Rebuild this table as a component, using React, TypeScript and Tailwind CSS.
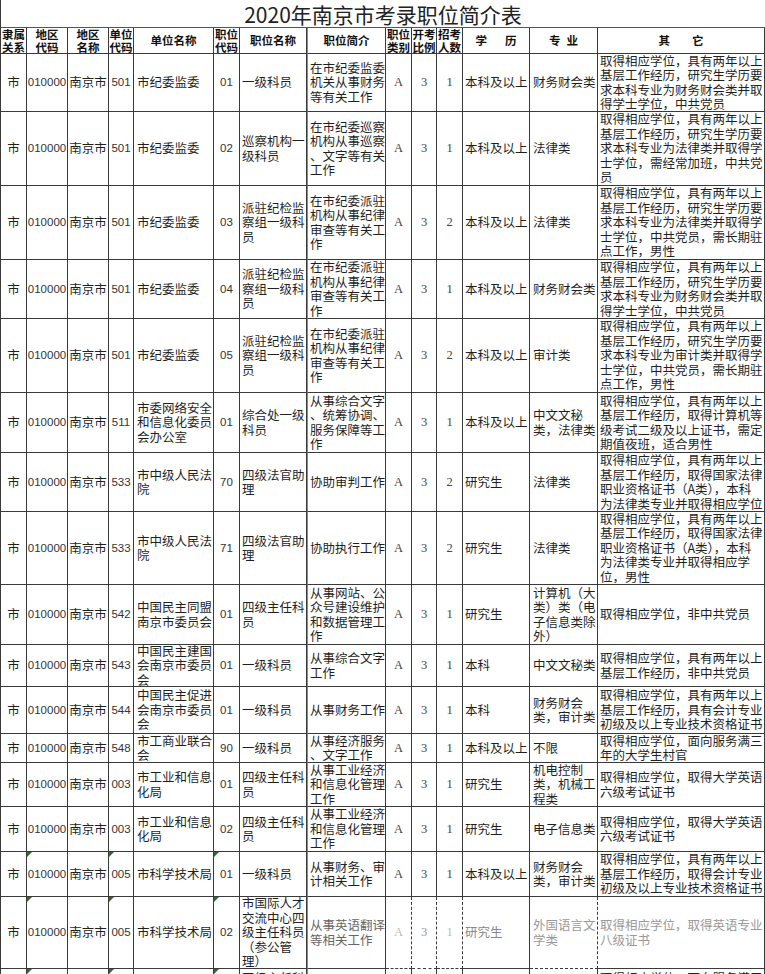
import React from "react";

type T = string | string[];
type Row = {
  h: string;
  ucode: string;
  uname: T;
  pcode: string;
  pname: T;
  desc: T;
  n: string;
  edu: string;
  major: T;
  other: T;
  tri?: boolean;
  wm?: boolean;
};

const GRID =
  "grid grid-cols-[26px_41px_41px_25px_80px_26px_67px_79px_26px_25px_26px_67px_68px_167px]";

const Lines = ({ t }: { t: T }) => {
  const arr = Array.isArray(t) ? t : [t];
  return (
    <div className="flex flex-col">
      {arr.map((l, i) => (
        <span key={i} className="whitespace-nowrap">
          {l}
        </span>
      ))}
    </div>
  );
};

const Tri = () => (
  <span className="absolute left-0 top-0 h-0 w-0 border-t-[5px] border-r-[5px] border-t-[#2f6b2f] border-r-transparent" />
);

const base =
  "relative flex items-center overflow-hidden border-b border-r border-[#3a3a3a]";

const C = ({
  t,
  center,
  cls = "",
  tri,
}: {
  t: T;
  center?: boolean;
  cls?: string;
  tri?: boolean;
}) => (
  <div
    className={`${base} ${center ? "justify-center text-center" : "justify-start pl-[2px]"} ${cls}`}
  >
    {tri && <Tri />}
    <Lines t={t} />
  </div>
);

const O1 = "取得相应学位，具有两年以上";
const O2 = "基层工作经历，研究生学历要";

const rows: Row[] = [
  {
    h: "h-[58px]", ucode: "501", uname: "市纪委监委", pcode: "01", pname: "一级科员",
    desc: ["在市纪委监委", "机关从事财务", "等有关工作"], n: "1", edu: "本科及以上", major: "财务财会类",
    other: [O1, O2, "求本科专业为财务财会类并取", "得学士学位，中共党员"],
  },
  {
    h: "h-[74px]", ucode: "501", uname: "市纪委监委", pcode: "02", pname: ["巡察机构一", "级科员"],
    desc: ["在市纪委巡察", "机构从事巡察", "、文字等有关", "工作"], n: "1", edu: "本科及以上", major: "法律类",
    other: [O1, O2, "求本科专业为法律类并取得学", "士学位，需经常加班，中共党", "员"],
  },
  {
    h: "h-[74px]", ucode: "501", uname: "市纪委监委", pcode: "03", pname: ["派驻纪检监", "察组一级科", "员"],
    desc: ["在市纪委派驻", "机构从事纪律", "审查等有关工", "作"], n: "2", edu: "本科及以上", major: "法律类",
    other: [O1, O2, "求本科专业为法律类并取得学", "士学位，中共党员，需长期驻", "点工作，男性"],
  },
  {
    h: "h-[59px]", ucode: "501", uname: "市纪委监委", pcode: "04", pname: ["派驻纪检监", "察组一级科", "员"],
    desc: ["在市纪委派驻", "机构从事纪律", "审查等有关工", "作"], n: "1", edu: "本科及以上", major: "财务财会类",
    other: [O1, O2, "求本科专业为财务财会类并取", "得学士学位，中共党员"],
  },
  {
    h: "h-[74px]", ucode: "501", uname: "市纪委监委", pcode: "05", pname: ["派驻纪检监", "察组一级科", "员"],
    desc: ["在市纪委派驻", "机构从事纪律", "审查等有关工", "作"], n: "2", edu: "本科及以上", major: "审计类",
    other: [O1, O2, "求本科专业为审计类并取得学", "士学位，中共党员，需长期驻", "点工作，男性"],
  },
  {
    h: "h-[60px]", ucode: "511", uname: ["市委网络安全", "和信息化委员", "会办公室"], pcode: "01",
    pname: ["综合处一级", "科员"], desc: ["从事综合文字", "、统筹协调、", "服务保障等工", "作"], n: "1",
    edu: "本科及以上", major: ["中文文秘", "类，法律类"],
    other: [O1, "基层工作经历，取得计算机等", "级考试二级及以上证书，需定", "期值夜班，适合男性"],
  },
  {
    h: "h-[59px]", ucode: "533", uname: ["市中级人民法", "院"], pcode: "70", pname: ["四级法官助", "理"],
    desc: "协助审判工作", n: "2", edu: "研究生", major: "法律类",
    other: [O1, "基层工作经历，取得国家法律", "职业资格证书（A类），本科", "为法律类专业并取得相应学位"],
  },
  {
    h: "h-[73px]", ucode: "533", uname: ["市中级人民法", "院"], pcode: "71", pname: ["四级法官助", "理"],
    desc: "协助执行工作", n: "2", edu: "研究生", major: "法律类",
    other: [O1, "基层工作经历，取得国家法律", "职业资格证书（A类），本科", "为法律类专业并取得相应学", "位，男性"],
  },
  {
    h: "h-[60px]", ucode: "542", uname: ["中国民主同盟", "南京市委员会"], pcode: "01", pname: ["四级主任科", "员"],
    desc: ["从事网站、公", "众号建设维护", "和数据管理工", "作"], n: "1", edu: "研究生",
    major: ["计算机（大", "类）类（电", "子信息类除", "外）"], other: "取得相应学位，非中共党员",
  },
  {
    h: "h-[42px]", ucode: "543", uname: ["中国民主建国", "会南京市委员", "会"], pcode: "01", pname: "一级科员",
    desc: ["从事综合文字", "工作"], n: "1", edu: "本科", major: "中文文秘类",
    other: [O1, "基层工作经历，非中共党员"],
  },
  {
    h: "h-[47px]", ucode: "544", uname: ["中国民主促进", "会南京市委员", "会"], pcode: "01", pname: "一级科员",
    desc: "从事财务工作", n: "1", edu: "本科", major: ["财务财会", "类，审计类"],
    other: [O1, "基层工作经历，具有会计专业", "初级及以上专业技术资格证书"],
  },
  {
    h: "h-[29px]", ucode: "548", uname: ["市工商业联合", "会"], pcode: "90", pname: "一级科员",
    desc: ["从事经济服务", "、文字工作"], n: "1", edu: "本科及以上", major: "不限",
    other: ["取得相应学位，面向服务满三", "年的大学生村官"],
  },
  {
    h: "h-[44px]", ucode: "003", uname: ["市工业和信息", "化局"], pcode: "01", pname: ["四级主任科", "员"],
    desc: ["从事工业经济", "和信息化管理", "工作"], n: "1", edu: "研究生", major: ["机电控制", "类，机械工", "程类"],
    other: ["取得相应学位，取得大学英语", "六级考试证书"],
  },
  {
    h: "h-[45px]", ucode: "003", uname: ["市工业和信息", "化局"], pcode: "02", pname: ["四级主任科", "员"],
    desc: ["从事工业经济", "和信息化管理", "工作"], n: "1", edu: "研究生", major: "电子信息类",
    other: ["取得相应学位，取得大学英语", "六级考试证书"],
  },
  {
    h: "h-[45px]", ucode: "005", uname: "市科学技术局", pcode: "01", pname: "一级科员",
    desc: ["从事财务、审", "计相关工作"], n: "1", edu: "本科及以上", major: ["财务财会", "类，审计类"],
    other: [O1, "基层工作经历，取得会计专业", "初级及以上专业技术资格证书"], tri: true,
  },
  {
    h: "h-[72px]", ucode: "005", uname: "市科学技术局", pcode: "02",
    pname: ["市国际人才", "交流中心四", "级主任科员", "（参公管", "理）"],
    desc: ["从事英语翻译", "等相关工作"], n: "1", edu: "研究生", major: ["外国语言文", "学类"],
    other: ["取得相应学位，取得英语专业", "八级证书"], tri: true, wm: true,
  },
];

const num = "font-['Liberation_Sans',sans-serif] text-[11.5px] text-[#333]";
const ser = "font-['Liberation_Serif',serif] text-[12.5px] text-[#444]";

const HeadCell = ({ children, cls = "" }: { children: React.ReactNode; cls?: string }) => (
  <div
    className={`flex items-center justify-center overflow-hidden border-b border-r border-[#3a3a3a] text-center ${cls}`}
  >
    {children}
  </div>
);

const Two = ({ a, b }: { a: string; b: string }) => (
  <div className="flex flex-col">
    <span>{a}</span>
    <span>{b}</span>
  </div>
);

export default function App() {
  return (
    <div className="h-[974px] w-[765px] overflow-hidden bg-white font-['Noto_Sans_CJK_SC',sans-serif] text-[#1f1f1f]">
      <div className="border-l border-[#3a3a3a]">
        <div className="flex h-[28px] items-center justify-center border-b border-[#555] text-[21px] leading-[28px] text-[#222]">
          2020年南京市考录职位简介表
        </div>
        <div className={`${GRID} h-[26px] text-[11.5px] font-bold leading-[12.5px] text-[#111]`}>
          <HeadCell><Two a="隶属" b="关系" /></HeadCell>
          <HeadCell><Two a="地区" b="代码" /></HeadCell>
          <HeadCell><Two a="地区" b="名称" /></HeadCell>
          <HeadCell><Two a="单位" b="代码" /></HeadCell>
          <HeadCell>单位名称</HeadCell>
          <HeadCell><Two a="职位" b="代码" /></HeadCell>
          <HeadCell>职位名称</HeadCell>
          <HeadCell cls="border-l border-l-[#888]">职位简介</HeadCell>
          <HeadCell><Two a="职位" b="类别" /></HeadCell>
          <HeadCell><Two a="开考" b="比例" /></HeadCell>
          <HeadCell><Two a="招考" b="人数" /></HeadCell>
          <HeadCell>
            <span className="flex gap-[18px]"><span>学</span><span>历</span></span>
          </HeadCell>
          <HeadCell>
            <span className="flex gap-[6px]"><span>专</span><span>业</span></span>
          </HeadCell>
          <HeadCell>
            <span className="flex gap-[22px]"><span>其</span><span>它</span></span>
          </HeadCell>
        </div>
        {rows.map((r, i) => (
          <div key={i} className={`${GRID} ${r.h} text-[12.5px] leading-[14.5px]`}>
            <C t="市" center />
            <C t="010000" center cls={num} tri={r.tri} />
            <C t="南京市" center />
            <C t={r.ucode} center cls={num} tri={r.tri} />
            <C t={r.uname} cls="pl-[3px]" />
            <C t={r.pcode} center cls={num} tri={r.tri} />
            <C t={r.pname} />
            <C t={r.desc} cls={`border-l border-l-[#888] ${r.wm ? "text-[#666]" : ""}`} />
            <C t="A" center cls={`${ser} ${r.wm ? "border-dashed text-[#bbb]" : ""}`} />
            <C t="3" center cls={`${ser} ${r.wm ? "border-dashed text-[#999]" : ""}`} />
            <C t={r.n} center cls={`${ser} ${r.wm ? "border-dashed text-[#bbb]" : ""}`} />
            <C t={r.edu} cls={r.wm ? "text-[#888]" : ""} />
            <C t={r.major} cls={`pl-[3px] ${r.wm ? "border-dashed text-[#999]" : ""}`} />
            <C t={r.other} cls={r.wm ? "text-[#999]" : ""} />
          </div>
        ))}
        <div className={`${GRID} h-[60px] text-[12.5px] leading-[14.5px]`}>
          <C t="市" center />
          <C t="010000" center cls={num} tri />
          <C t="南京市" center />
          <C t="005" center cls={num} tri />
          <C t="市科学技术局" cls="pl-[3px]" />
          <C t="03" center cls={num} tri />
          <div className={`${base} items-start pl-[2px] pt-[2px]`}>
            <Lines t={["四级主任科", "员"]} />
          </div>
          <C t="从事综合工作" cls="border-l border-l-[#888]" />
          <C t="A" center cls={ser} />
          <C t="3" center cls={ser} />
          <C t="1" center cls={ser} />
          <C t="本科及以上" />
          <C t="不限" cls="pl-[3px]" />
          <div className={`${base} items-start pl-[2px] pt-[2px]`}>
            <Lines t={["取得相应学位，面向服务满三", "年的大学生村官"]} />
          </div>
        </div>
      </div>
    </div>
  );
}
